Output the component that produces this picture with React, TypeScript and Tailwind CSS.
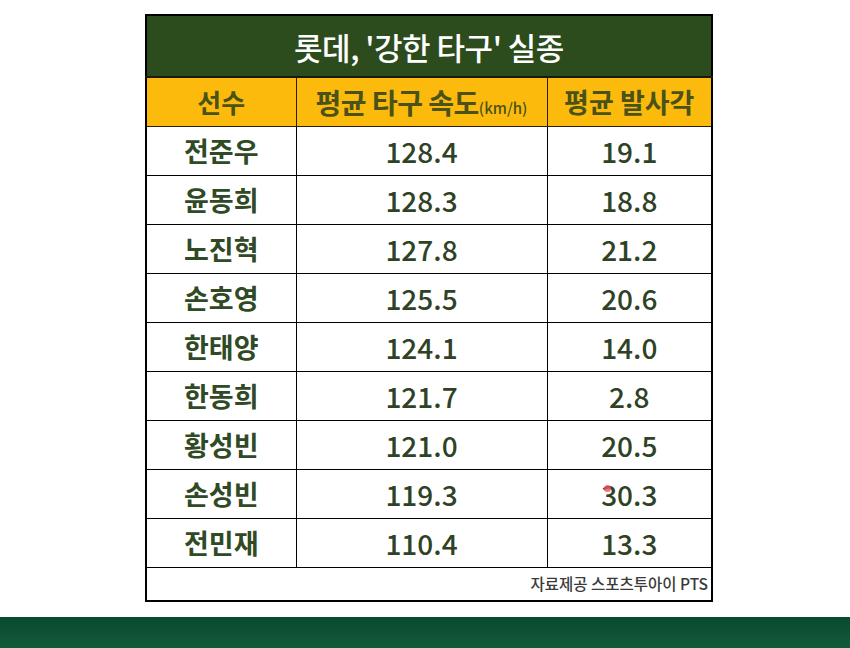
const TITLE_BG = "#2d4c1e";
const HEAD_BG = "#fcba0c";

const rows: [string, string, string][] = [
  ["전준우", "128.4", "19.1"],
  ["윤동희", "128.3", "18.8"],
  ["노진혁", "127.8", "21.2"],
  ["손호영", "125.5", "20.6"],
  ["한태양", "124.1", "14.0"],
  ["한동희", "121.7", "2.8"],
  ["황성빈", "121.0", "20.5"],
  ["손성빈", "119.3", "30.3"],
  ["전민재", "110.4", "13.3"],
];

export default function App() {
  return (
    <div
      className="flex h-[648px] w-[850px] flex-col bg-white"
      style={{ fontFamily: '"Noto Sans CJK KR", "Noto Sans", sans-serif' }}
    >
      <div className="flex-1 pl-[145px] pt-[14px]">
        <table className="w-[568px] table-fixed border-collapse border-[2px] border-black">
          <colgroup>
            <col className="w-[150px]" />
            <col className="w-[251px]" />
            <col />
          </colgroup>
          <thead>
            <tr className="h-[62px]" style={{ backgroundColor: TITLE_BG }}>
              <th
                colSpan={3}
                className="border-b-[2px] border-[#1a1a0a] text-center text-[31px] leading-none font-medium tracking-[-0.5px] text-white"
              >
                롯데, '강한 타구' 실종
              </th>
            </tr>
            <tr className="h-[49px]" style={{ backgroundColor: HEAD_BG }}>
              <th className="border-[1.5px] border-[#2a1e08] text-center text-[26px] leading-none font-bold text-[#4a5218]">
                선수
              </th>
              <th className="border-[1.5px] border-[#2a1e08] text-center text-[28px] leading-none font-bold tracking-[-0.5px] text-[#4a5218]">
                평균 타구 속도<span className="text-[15px] font-medium tracking-normal">(km/h)</span>
              </th>
              <th className="border-[1.5px] border-[#2a1e08] text-center text-[27px] leading-none font-bold text-[#4a5218]">
                평균 발사각
              </th>
            </tr>
          </thead>
          <tbody>
            {rows.map(([name, speed, angle]) => (
              <tr key={name} className="h-[49px] bg-white">
                <td className="border-[1.5px] border-black text-center text-[27px] leading-none font-bold text-[#2f4a24]">
                  {name}
                </td>
                <td className="border-[1.5px] border-black text-center text-[28px] leading-none font-medium text-[#2f4226]">
                  {speed}
                </td>
                <td className="relative border-[1.5px] border-black text-center text-[28px] leading-none font-medium text-[#2f4226]">
                  {angle}
                  {angle === "30.3" && (
                    <span className="absolute left-[56px] top-[15px] size-[7px] rounded-full bg-[#e8506a]/80" />
                  )}
                </td>
              </tr>
            ))}
            <tr className="h-[34px] bg-white">
              <td
                colSpan={3}
                className="border-[1.5px] border-black pr-[3px] text-right text-[15.5px] leading-none font-medium text-[#3a3a3a]"
              >
                자료제공 스포츠투아이 PTS
              </td>
            </tr>
          </tbody>
        </table>
      </div>
      <div className="h-[31px] bg-gradient-to-b from-[#0a4a2e] to-[#125a3a]" />
    </div>
  );
}
